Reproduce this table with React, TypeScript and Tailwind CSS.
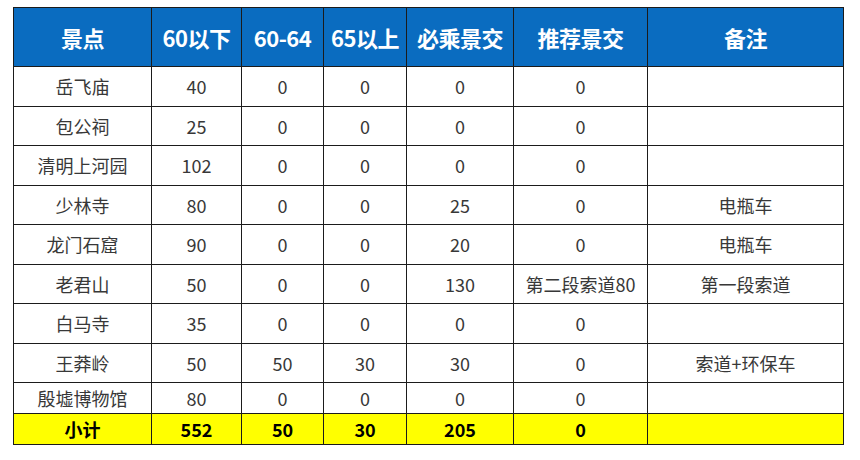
const headers = ["景点", "60以下", "60-64", "65以上", "必乘景交", "推荐景交", "备注"];
const colWidths = ["w-[138px]", "w-[90px]", "w-[82px]", "w-[83px]", "w-[107px]", "w-[134px]", "w-[196px]"];

const rows: { cells: string[]; h: string }[] = [
  { cells: ["岳飞庙", "40", "0", "0", "0", "0", ""], h: "h-[39.5px]" },
  { cells: ["包公祠", "25", "0", "0", "0", "0", ""], h: "h-[39.5px]" },
  { cells: ["清明上河园", "102", "0", "0", "0", "0", ""], h: "h-[39.5px]" },
  { cells: ["少林寺", "80", "0", "0", "25", "0", "电瓶车"], h: "h-[39.5px]" },
  { cells: ["龙门石窟", "90", "0", "0", "20", "0", "电瓶车"], h: "h-[39.5px]" },
  { cells: ["老君山", "50", "0", "0", "130", "第二段索道80", "第一段索道"], h: "h-[39px]" },
  { cells: ["白马寺", "35", "0", "0", "0", "0", ""], h: "h-[40px]" },
  { cells: ["王莽岭", "50", "50", "30", "30", "0", "索道+环保车"], h: "h-[39px]" },
  { cells: ["殷墟博物馆", "80", "0", "0", "0", "0", ""], h: "h-[31px]" },
];

const total = ["小计", "552", "50", "30", "205", "0", ""];

export default function App() {
  return (
    <div className="w-[860px] h-[460px] bg-white pl-[13px] pt-[7px] font-['Noto_Sans_CJK_SC','Noto_Sans',sans-serif]">
      <table className="table-fixed border-collapse w-[831px] text-center">
        <colgroup>
          {colWidths.map((w, i) => (
            <col key={i} className={w} />
          ))}
        </colgroup>
        <thead>
          <tr className="h-[59px] bg-[#0a6cc0]">
            {headers.map((h) => (
              <th key={h} className="border border-[#1b1b1b] text-white text-[22px] leading-none font-bold p-0 whitespace-nowrap tracking-[-0.5px]">
                {h}
              </th>
            ))}
          </tr>
        </thead>
        <tbody>
          {rows.map((r) => (
            <tr key={r.cells[0]} className={r.h}>
              {r.cells.map((c, i) => (
                <td key={i} className="border border-[#1b1b1b] text-[18px] leading-none text-[#383838] p-0 whitespace-nowrap">
                  {c}
                </td>
              ))}
            </tr>
          ))}
          <tr className="h-[31px] bg-[#ffff00]">
            {total.map((c, i) => (
              <td key={i} className="border border-[#1b1b1b] text-[18px] leading-none font-bold text-black p-0">
                {c}
              </td>
            ))}
          </tr>
        </tbody>
      </table>
    </div>
  );
}
